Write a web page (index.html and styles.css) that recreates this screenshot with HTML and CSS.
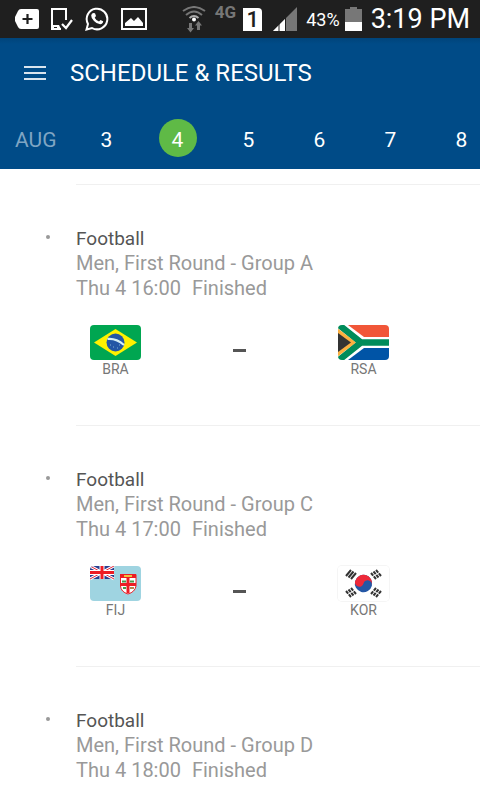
FILE: index.html
```html
<!DOCTYPE html>
<html lang="en">
<head>
<meta charset="utf-8">
<meta name="viewport" content="width=device-width, initial-scale=1">
<title>Schedule &amp; Results</title>
<link rel="stylesheet" href="styles.css">
</head>
<body>
<div class="app">
  <div class="status">
    <div class="status-left">
      <svg width="24" height="20" viewBox="0 0 24 20"><path d="M6 0H22Q24 0 24 2V18Q24 20 22 20H6Q4 20 3 18L0 12Q-.5 10 0 8L3 2Q4 0 6 0Z" fill="#fff"/><path d="M12.500 5V15M7.500 10H17.500" stroke="#1f1f1f" stroke-width="2.200"/></svg>
      <svg width="22" height="23" viewBox="0 0 22 23" fill="none"><path d="M15 12V1H1V21H10" stroke="#fff" stroke-width="2"/><path d="M1 17H8L10 21H1Z" fill="#fff"/><path d="M3 19.500H6" stroke="#1f1f1f"/><path d="M11 16L15 20L21 12" stroke="#fff" stroke-width="2.200"/></svg>
      <svg width="24" height="24" viewBox="0 0 24 24"><path d="M1.500 22.500L3 17A10.300 10.300 0 1 1 7 21Z" fill="none" stroke="#fff" stroke-width="2"/><path d="M8 6L10 6.200L11 9L9.700 10.800Q11 13.500 14 14.500L15.500 13L18.200 14.300Q18 17 15.200 17.300Q12 17.200 9 14Q6 11 6.200 8.500Q6.500 6.800 8 6Z" fill="#fff"/></svg>
      <svg width="26" height="22" viewBox="0 0 26 22"><path d="M1 1H25V21H1Z" fill="none" stroke="#fff" stroke-width="2"/><path d="M4 18V15L10 10L13 13L17 9L22 15V18Z" fill="#fff"/></svg>
    </div>
    <div class="status-right">
      <svg class="wifi" width="24" height="27" viewBox="0 0 24 27"><g fill="none" stroke="#777" stroke-width="2"><path d="M1 5Q12-3 23 5"/><path d="M4 9Q12 2 20 9"/><path d="M7.500 12Q12 8 16.500 12" stroke="#aaa"/></g><circle cx="12" cy="13.500" r="2" fill="#fff"/><path d="M7 17H10V22H12L8.500 26.500L5 22H7ZM15 24V19.500H13L16.500 15L20 19.500H18V24Z" fill="#777"/></svg>
      <span class="network">4G</span>
      <span class="sim">1</span>
      <svg class="signal" width="24" height="24" viewBox="0 0 24 24"><path d="M0 24L24 0V24Z" fill="#777"/><path d="M0 24L12 12V24Z" fill="#fff"/><path d="M6 16V24M12.500 10V24" stroke="#1f1f1f"/></svg>
      <span class="percent">43%</span>
      <svg width="17" height="24" viewBox="0 0 17 24"><path d="M5 0H12V2H17V15H0V2H5Z" fill="#777"/><path d="M0 15H17V24H0Z" fill="#fff"/></svg>
      <time class="clock">3:19 PM</time>
    </div>
  </div>
  <header class="header">
    <div class="title-bar">
      <button class="menu" type="button" aria-label="Menu"><span></span><span></span><span></span></button>
      <h1>SCHEDULE &amp; RESULTS</h1>
    </div>
    <nav class="dates" aria-label="Date">
      <span class="month">AUG</span>
      <a href="#3"><span>3</span></a>
      <a href="#4" class="selected" aria-current="date"><span>4</span></a>
      <a href="#5"><span>5</span></a>
      <a href="#6"><span>6</span></a>
      <a href="#7"><span>7</span></a>
      <a href="#8"><span>8</span></a>
    </nav>
  </header>
  <main class="schedule">
    <article class="event">
      <span class="marker"></span>
      <div class="details">
        <h2>Football</h2>
        <p>Men, First Round - Group A</p>
        <p class="when"><time>Thu 4 16:00</time><span>Finished</span></p>
        <div class="match">
          <div class="team">
            <svg class="flag" viewBox="0 0 51 35"><path fill="#00a651" d="M0 0H51V35H0Z"/><path fill="#fff100" d="M4 17.500L25.500 4L47 17.500L25.500 31Z"/><circle cx="25.500" cy="17.500" r="9" fill="#2356a5"/><path d="M17.500 14Q26 13 34 20" fill="none" stroke="#d5eef5" stroke-width="2"/><path d="M20 20h1M23 22h1M27 23h1M29 20h1" stroke="#82afd2"/></svg>
            <span>BRA</span>
          </div>
          <span class="score"></span>
          <div class="team">
            <svg class="flag" viewBox="0 0 51 35"><path fill="#fff" d="M0 0H51V35H0Z"/><path fill="#f15638" d="M10 0H51V12H26Z"/><path fill="#0054a6" d="M10 35H51V23H26Z"/><path fill="#fbb040" d="M0 4L18 17.500L0 31Z"/><path fill="#333" d="M0 8L13 17.500L0 27Z"/><path d="M1 0L23 17.500H51M1 35L23 17.500" fill="none" stroke="#008c5a" stroke-width="6.500"/><path d="M0 5L16 17.500L0 30" fill="none" stroke="#fbb040" stroke-width="2"/></svg>
            <span>RSA</span>
          </div>
        </div>
      </div>
    </article>
    <article class="event">
      <span class="marker"></span>
      <div class="details">
        <h2>Football</h2>
        <p>Men, First Round - Group C</p>
        <p class="when"><time>Thu 4 17:00</time><span>Finished</span></p>
        <div class="match">
          <div class="team">
            <svg class="flag" viewBox="0 0 51 35"><path fill="#9fd4e1" d="M0 0H51V35H0Z"/><path fill="#293e8f" d="M0 0H24V13H0Z"/><path d="M0 0L24 13M24 0L0 13" stroke="#fff" stroke-width="3"/><path d="M0 0L24 13M24 0L0 13" stroke="#e6293d" stroke-width="1"/><path d="M12 0V13M0 6.500H24" stroke="#fff" stroke-width="5"/><path d="M12 0V13M0 6.500H24" stroke="#ed1c24" stroke-width="3"/><path fill="#fff" stroke="#ed1c24" d="M30.500 8.500H46V20Q45 26 38 28Q31 26 30.500 20Z"/><path fill="#ed1c24" d="M30 8H46V12H30Z"/><path d="M38 12V27M30 18.500H46" stroke="#ed1c24" stroke-width="3"/><path d="M32 15.500H36M40 15.500H44M33 22H36" stroke="#48994d" stroke-width="2"/><path d="M34 10H42" stroke="#efc33d" stroke-width="2"/><path d="M40 22H44" stroke="#b48652" stroke-width="2"/></svg>
            <span>FIJ</span>
          </div>
          <span class="score"></span>
          <div class="team">
            <svg class="flag light" viewBox="0 0 51 35"><path fill="#fff" d="M0 0H51V35H0Z"/><g transform="rotate(15 25.500 17.500)"><circle cx="25.500" cy="17.500" r="8.700" fill="#2457a5"/><path fill="#ed2939" d="M16.800 17.500A8.700 8.700 0 0 1 34.200 17.500A4.350 4.350 0 0 0 25.500 17.500A4.350 4.350 0 0 1 16.800 17.500Z"/></g><g stroke="#333" stroke-width="2"><path d="M8 10L13 4M10.500 11.500L15.500 5.500M13 13L18 7"/><path d="M43 10L38 4M40.500 11.500L35.500 5.500M38 13L33 7" stroke-dasharray="3.400 1"/><path d="M8 25L13 31M10.500 23.500L15.500 29.500M13 22L18 28" stroke-dasharray="3.400 1"/><path d="M43 25L38 31M40.500 23.500L35.500 29.500M38 22L33 28" stroke-dasharray="3.400 1"/></g></svg>
            <span>KOR</span>
          </div>
        </div>
      </div>
    </article>
    <article class="event">
      <span class="marker"></span>
      <div class="details">
        <h2>Football</h2>
        <p>Men, First Round - Group D</p>
        <p class="when"><time>Thu 4 18:00</time><span>Finished</span></p>
      </div>
    </article>
  </main>
</div>
</body>
</html>
```
FILE: styles.css
```css
* { box-sizing: border-box; }

body {
  margin: 0;
  font-family: Roboto, "Liberation Sans", sans-serif;
  background: #fff;
  color: #999;
}

.app {
  display: flex;
  flex-direction: column;
  height: 100vh;
  overflow: hidden;
}

.status {
  display: flex;
  justify-content: space-between;
  height: 38px;
  padding: 0 10px 0 15px;
  background: #1f1f1f;
  color: #fff;
  flex: none;
}

.status-left,
.status-right {
  display: flex;
  align-items: center;
}

.status-left { gap: 12px; }
.status-right { gap: 9px; }
.status svg { flex: none; }

.network {
  align-self: flex-start;
  margin: 2px -2px 0 0;
  font-size: 17px;
  line-height: 20px;
  font-weight: 700;
  color: #777;
}

.sim {
  width: 19px;
  height: 23px;
  background: #fff;
  color: #1f1f1f;
  border-top-right-radius: 4px;
  font-size: 22px;
  font-weight: 500;
  line-height: 24px;
  text-align: center;
}

.signal { margin-left: 2px; }

.percent { font-size: 18px; }
.status-right .percent + svg { margin-left: -4px; }

.clock { font-size: 27px; }

.header {
  flex: none;
  background: linear-gradient(#00447a, #004b87 6px);
  color: #fff;
}

.title-bar {
  display: flex;
  align-items: center;
  gap: 24px;
  height: 70px;
  padding-left: 24px;
}

.menu {
  display: flex;
  flex-direction: column;
  gap: 4px;
  width: 22px;
  padding: 0;
  border: 0;
  background: none;
}

.menu span {
  height: 2px;
  width: 100%;
  background: #d9e4ee;
}

h1 {
  margin: 0;
  font-size: 24px;
  font-weight: 400;
}

.dates {
  display: flex;
  height: 61px;
  overflow: hidden;
  font-size: 21px;
  line-height: 42px;
  padding-top: 11px;
}

.month {
  flex: 0 0 71px;
  padding-left: 15px;
  color: #7fa5c3;
}

.dates a {
  display: flex;
  justify-content: center;
  flex: 0 0 71px;
  color: #fff;
  text-decoration: none;
}

.dates a span {
  width: 38px;
  height: 38px;
  text-align: center;
}

.selected span {
  border-radius: 50%;
  background: #5fba46;
}

.schedule {
  flex: 1;
  overflow: hidden;
  padding-top: 15px;
}

.event {
  display: grid;
  grid-template-columns: 76px 1fr;
}

.marker {
  width: 4px;
  height: 4px;
  margin: 51px 0 0 46px;
  border-radius: 50%;
  background: #999;
}

.details {
  padding: 41px 0 47px;
  border-top: 1px solid #f0f0f0;
  font-size: 20px;
  line-height: 25px;
}

.details h2,
.details p {
  margin: 0;
  font-weight: 400;
}

.details h2 {
  font-size: 19px;
  color: #555;
}

.when {
  display: flex;
  gap: 11px;
}

.match {
  display: flex;
  gap: 92px;
  margin-top: 24px;
  padding-left: 14px;
}

.team {
  display: flex;
  flex-direction: column;
  width: 51px;
  text-align: center;
  font-size: 14px;
  line-height: 18px;
  color: #777;
}

.flag {
  display: block;
  width: 51px;
  height: 35px;
  border-radius: 4px;
}

.light { box-shadow: 0 0 0 1px #f5f5f5; }

.score {
  width: 13px;
  height: 3px;
  margin-top: 24px;
  background: #555;
}
```
